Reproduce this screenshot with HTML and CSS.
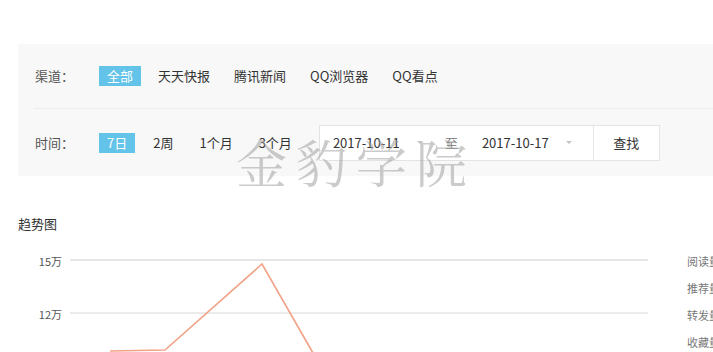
FILE: index.html
```html
<!DOCTYPE html>
<html lang="zh-CN">
<head>
<meta charset="utf-8">
<title>趋势</title>
<link rel="stylesheet" href="styles.css">
</head>
<body>
<div class="page">
  <div class="filter">
    <div class="filter-inner">
      <div class="row row-channel">
        <span class="label">渠道：</span>
        <ul class="opts">
          <li class="opt active">全部</li>
          <li class="opt">天天快报</li>
          <li class="opt">腾讯新闻</li>
          <li class="opt">QQ浏览器</li>
          <li class="opt">QQ看点</li>
        </ul>
      </div>
      <div class="row row-time">
        <span class="label">时间：</span>
        <ul class="opts">
          <li class="opt active">7日</li>
          <li class="opt">2周</li>
          <li class="opt">1个月</li>
          <li class="opt">3个月</li>
        </ul>
        <div class="range">
          <div class="date date-start"><span class="date-text">2017-10-11</span><span class="caret"></span></div>
          <span class="to">至</span>
          <div class="date date-end"><span class="date-text">2017-10-17</span><span class="caret"></span></div>
          <button class="search">查找</button>
        </div>
      </div>
    </div>
  </div>
  <div class="watermark">金豹学院</div>
  <div class="trend">
    <h3 class="trend-title">趋势图</h3>
    <svg class="chart" width="713" height="140" viewBox="0 0 713 140">
      <line x1="70" y1="20" x2="648" y2="20" stroke="#dedede" stroke-width="1.5"/>
      <line x1="70" y1="73" x2="648" y2="73" stroke="#d8d8d8" stroke-width="1"/>
      <text x="62" y="26" class="axis" text-anchor="end">15万</text>
      <text x="62" y="79" class="axis" text-anchor="end">12万</text>
      <polyline points="110,111 165,110 262,24 313,113" fill="none" stroke="#f2a286" stroke-width="1.6"/>
      <text x="687" y="26" class="legend">阅读量</text>
      <text x="687" y="53" class="legend">推荐量</text>
      <text x="687" y="80" class="legend">转发量</text>
      <text x="687" y="107" class="legend">收藏量</text>
    </svg>
  </div>
</div>
</body>
</html>
```
FILE: styles.css
```css
html, body {
  margin: 0;
  padding: 0;
  background: #fff;
  overflow: hidden;
}
body {
  font-family: "Noto Sans CJK SC", "Microsoft YaHei", sans-serif;
  font-size: 13px;
  color: #333;
}
.page {
  position: relative;
  padding-top: 44px;
}
.filter {
  margin-left: 18px;
  background: #f8f8f8;
}
.filter-inner {
  margin-left: 16px;
}
.row {
  display: flex;
  align-items: center;
}
.row-channel {
  height: 64px;
}
.row-time {
  height: 67px;
  border-top: 1px solid #ececec;
}
.label {
  width: 57px;
  padding-left: 1px;
  color: #555;
  line-height: 20px;
}
.opts {
  display: flex;
  align-items: center;
  gap: 8px;
  list-style: none;
  margin: 0;
  padding: 0;
  margin-left: 7px;
}
.opt {
  padding: 0 8px;
  line-height: 20px;
  height: 20px;
  color: #333;
  white-space: nowrap;
}
.row-channel .opt:nth-child(2) {
  margin-left: 1px;
}
.row-time .opts {
  gap: 10px;
}
.opt.active {
  background: #63c3e9;
  color: #fff;
}
.range {
  display: flex;
  align-items: center;
  height: 34px;
  margin-left: 19px;
  background: #fff;
  border: 1px solid #e4e4e4;
}
.date {
  display: flex;
  align-items: center;
  box-sizing: border-box;
  color: #333;
}
.date-start {
  width: 125px;
  padding-left: 13px;
}
.date-end {
  width: 111px;
}
.date-text {
  width: 84px;
  white-space: nowrap;
}
.caret {
  position: relative;
  z-index: 2;
  width: 0;
  height: 0;
  border-left: 3px solid transparent;
  border-right: 3px solid transparent;
  border-top: 3px solid #c4c4c4;
}
.to {
  width: 37px;
  color: #888;
}
.search {
  height: 34px;
  width: 66px;
  margin: 0;
  padding: 0;
  border: none;
  border-left: 1px solid #e4e4e4;
  background: #fff;
  font: inherit;
  color: #333;
}
.watermark {
  position: absolute;
  left: 236px;
  top: 131px;
  font-family: "Noto Serif CJK SC", "Noto Sans CJK SC", serif;
  font-size: 51px;
  letter-spacing: 9px;
  line-height: 60px;
  color: rgba(160, 160, 160, 0.55);
  pointer-events: none;
}
.trend {
  padding-top: 38px;
}
.trend-title {
  margin: 0 0 6px 18px;
  font-size: 13px;
  font-weight: normal;
  line-height: 20px;
  color: #333;
}
.chart {
  display: block;
}
.axis {
  font-family: "Noto Sans CJK SC", sans-serif;
  font-size: 11px;
  fill: #555;
}
.legend {
  font-family: "Noto Sans CJK SC", sans-serif;
  font-size: 11px;
  fill: #777;
}
```
